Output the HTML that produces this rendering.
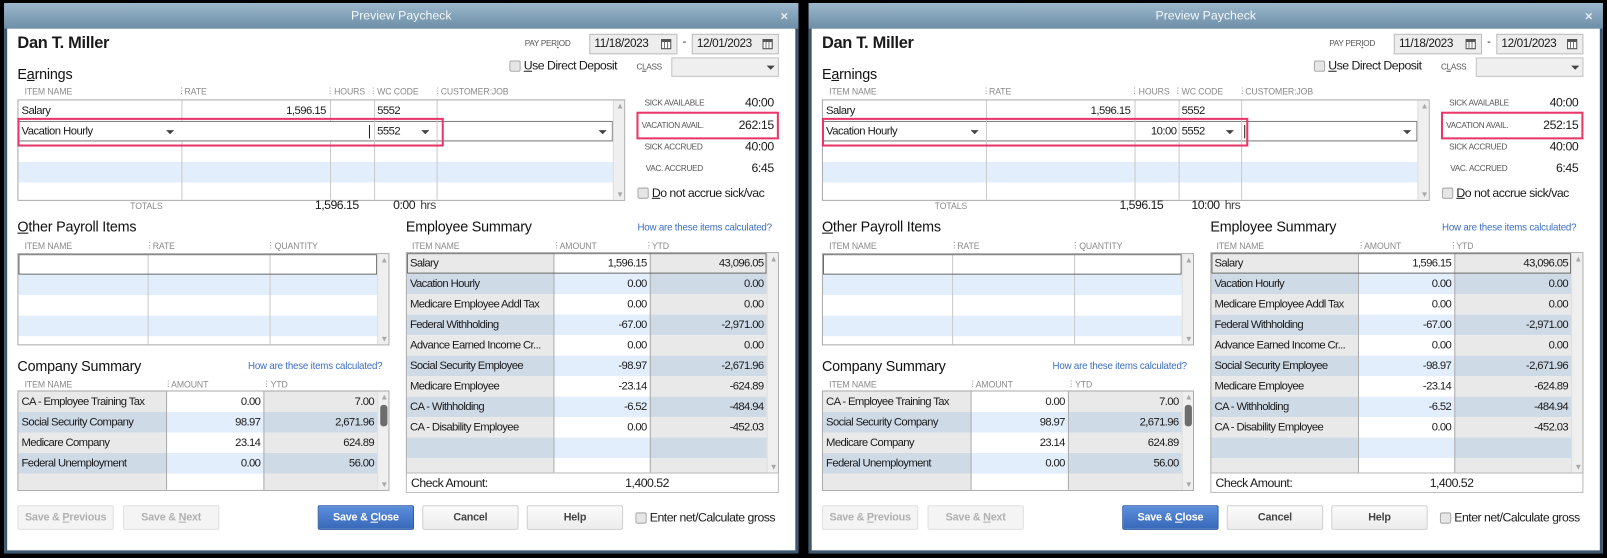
<!DOCTYPE html>
<html><head><meta charset="utf-8"><style>
*{box-sizing:border-box}
body{margin:0;width:1607px;height:557px;background:#000;overflow:hidden;font-family:"Liberation Sans",sans-serif;font-size:11px;color:#1a1a1a}
#s{position:absolute;left:0;top:0;width:1568px;height:544px;transform:scale(1.02487);transform-origin:0 0}
.d{position:absolute;top:0;width:785px;height:544px}
.a{position:absolute;white-space:nowrap}
.frame{left:4px;top:3px;width:775px;height:537px;background:#fff;border:3px solid #3b5870;border-top:none}
.title{left:4px;top:3px;width:775px;height:25px;background:linear-gradient(#9bb7cc,#6d8ea7);color:#f4f8fb;text-align:center;line-height:25px;font-size:12px}
.x{right:10px;top:0;color:#e4ecf2;font-weight:bold;font-size:13px}
.h{font-size:8.5px;color:#8a8a8a;letter-spacing:-.1px}
.sec{font-size:14px;color:#111;letter-spacing:-.2px}
.lnk{font-size:9.5px;color:#3b6ec2;letter-spacing:-.2px}
.grid{border:1px solid #a9a9a9;background:#fff;overflow:hidden}
.vl{position:absolute;top:0;bottom:0;width:1px;background:#c9c9c9}
.sb{position:absolute;top:0;bottom:0;background:#efefef;border-left:1px solid #ddd}
.sb i{position:absolute;left:2px;font-style:normal;font-size:8px;color:#a8a8a8}
.row{position:absolute;left:0;height:20px;line-height:20px;letter-spacing:-.5px}
.lb{background:#e2eefc}
.r{position:absolute;left:0;display:flex;height:20px;line-height:20px;letter-spacing:-.6px}
.r div{padding:0 3px;overflow:hidden}
.g{background:#e9e9e9}.b{background:#cfdae7}.w{background:#fff}.l{background:#e2eefc}
.num{text-align:right}
.cb{width:11px;height:11px;border:1px solid #aaa;background:#e6e6e6;border-radius:2px}
.btn{top:493px;height:24px;line-height:22px;text-align:center;font-weight:bold;font-size:10.5px;border:1px solid #cfcfcf;border-radius:2px;background:linear-gradient(#fbfbfb,#ececec);color:#444;letter-spacing:-.2px}
.dis{color:#b0b0b0;background:#f4f4f4;border-color:#e0e0e0}
.pri{background:linear-gradient(#5b8fdc,#3868b8);border-color:#2f5ca6;color:#fff}
.date{top:33px;height:20px;background:#ededed;border:1px solid #bdbdbd;font-size:11.5px;line-height:18px;padding-left:4px;letter-spacing:-.4px}
.cal{position:absolute;right:5px;top:4px;width:10px;height:10px;border:1px solid #555;border-top-width:3px;background:repeating-linear-gradient(90deg,#fff 0 2px,#777 2px 3px)}
.arr{width:0;height:0;border-left:4px solid transparent;border-right:4px solid transparent;border-top:4px solid #444}
.red{border:2px solid #e8386a}
.rp{font-size:8px;color:#555;letter-spacing:-.3px}
.rv{font-size:12px;text-align:right;width:60px;letter-spacing:-.4px}
.t12{font-size:12px;letter-spacing:-.5px}
</style></head><body><div id="s">

<!-- LEFT -->
<div class="d" style="left:0">
<div class="a frame"></div>
<div class="a title">Preview Paycheck<span class="a x">×</span></div>
<div class="a" style="left:17px;top:34px;font-size:16px;font-weight:bold;letter-spacing:-.3px">Dan T. Miller</div>
<div class="a sec" style="left:17px;top:64px">E<u>a</u>rnings</div>
<div class="a rp" style="left:512px;top:38px">PAY PER<u>I</u>OD</div>
<div class="a date" style="left:575px;width:86px">11/18/2023<span class="cal"></span></div>
<div class="a" style="left:666px;top:35px">-</div>
<div class="a date" style="left:675px;width:85px">12/01/2023<span class="cal"></span></div>
<div class="a cb" style="left:497px;top:59px"></div>
<div class="a t12" style="left:511px;top:57px"><u>U</u>se Direct Deposit</div>
<div class="a rp" style="left:621px;top:61px">C<u>L</u>ASS</div>
<div class="a" style="left:655px;top:56px;width:105px;height:19px;background:#efefef;border:1px solid #c4c4c4"><div class="a arr" style="left:92px;top:7px"></div></div>

<div class="a h" style="left:24px;top:84px">ITEM NAME</div><div class="a h" style="left:173px;top:83px">⋮</div>
<div class="a h" style="left:180px;top:84px">RATE</div><div class="a h" style="left:318px;top:83px">⋮</div>
<div class="a h" style="left:326px;top:84px">HOURS</div><div class="a h" style="left:360px;top:83px">⋮</div>
<div class="a h" style="left:368px;top:84px">WC CODE</div><div class="a h" style="left:423px;top:83px">⋮</div>
<div class="a h" style="left:430px;top:84px">CUSTOMER:JOB</div>
<div class="a grid" style="left:17px;top:97px;width:593px;height:99px">
 <div class="row lb" style="top:60px;width:580px"></div>
 <div class="vl" style="left:159px"></div><div class="vl" style="left:304px"></div><div class="vl" style="left:347px"></div><div class="vl" style="left:408px"></div>
 <div class="row" style="top:0;left:3px">Salary</div>
 <div class="row num" style="top:0;left:200px;width:100px">1,596.15</div>
 <div class="row" style="top:0;left:350px">5552</div>
 <div class="row" style="top:20px;width:580px;border:1px solid #7a7a7a;background:#fff"></div>
 <div class="row" style="top:20px;left:3px">Vacation Hourly</div>
 <div class="a arr" style="left:144px;top:29px"></div>
 <div class="a" style="left:342px;top:24px;width:1px;height:13px;background:#222"></div>
 <div class="a" style="left:347px;top:20px;width:1px;height:20px;background:#c9c9c9"></div>
 <div class="row" style="top:20px;left:350px">5552</div>
 <div class="a arr" style="left:393px;top:29px"></div>
 <div class="a" style="left:408px;top:20px;width:1px;height:20px;background:#c9c9c9"></div>
 <div class="a arr" style="left:566px;top:29px"></div>
 <div class="sb" style="left:580px;width:12px"><i style="top:1px">▲</i><i style="bottom:1px">▼</i></div>
</div>
<div class="a red" style="left:17px;top:115px;width:416px;height:28px"></div>
<div class="a h" style="left:127px;top:196px">TOTALS</div>
<div class="a num t12" style="left:270px;top:193px;width:80px">1,596.15</div>
<div class="a num t12" style="left:360px;top:193px;width:45px">0:00</div>
<div class="a t12" style="left:410px;top:193px;color:#444">hrs</div>

<div class="a rp" style="left:629px;top:96px">SICK AVAILABLE</div><div class="a rv" style="left:695px;top:93px">40:00</div>
<div class="a rp" style="left:626px;top:118px">VACATION AVAIL.</div><div class="a rv" style="left:695px;top:115px">262:15</div>
<div class="a rp" style="left:629px;top:139px">SICK ACCRUED</div><div class="a rv" style="left:695px;top:136px">40:00</div>
<div class="a rp" style="left:630px;top:160px">VAC. ACCRUED</div><div class="a rv" style="left:695px;top:157px">6:45</div>
<div class="a red" style="left:621px;top:109px;width:139px;height:27px"></div>
<div class="a cb" style="left:622px;top:183px"></div>
<div class="a t12" style="left:636px;top:181px"><u>D</u>o not accrue sick/vac</div>

<div class="a sec" style="left:17px;top:213px"><u>O</u>ther Payroll Items</div>
<div class="a h" style="left:24px;top:235px">ITEM NAME</div><div class="a h" style="left:142px;top:234px">⋮</div>
<div class="a h" style="left:149px;top:235px">RATE</div><div class="a h" style="left:260px;top:234px">⋮</div>
<div class="a h" style="left:268px;top:235px">QUANTITY</div>
<div class="a grid" style="left:17px;top:247px;width:363px;height:90px">
 <div class="row lb" style="top:20px;width:350px"></div>
 <div class="row lb" style="top:60px;width:350px"></div>
 <div class="vl" style="left:126px"></div><div class="vl" style="left:245px"></div>
 <div class="row" style="top:0;width:350px;border:1px solid #6a6a6a"></div>
 <div class="sb" style="left:350px;width:12px"><i style="top:1px">▲</i><i style="bottom:1px">▼</i></div>
</div>

<div class="a sec" style="left:17px;top:349px">Company Summary</div>
<div class="a lnk" style="left:242px;top:352px">How are these items calculated?</div>
<div class="a h" style="left:24px;top:370px">ITEM NAME</div><div class="a h" style="left:160px;top:369px">⋮</div>
<div class="a h" style="left:167px;top:370px">AMOUNT</div><div class="a h" style="left:256px;top:369px">⋮</div>
<div class="a h" style="left:264px;top:370px">YTD</div>
<div class="a grid" style="left:17px;top:381px;width:363px;height:98px">
 <div class="r" style="top:0"><div class="g" style="width:144px">CA - Employee Training Tax</div><div class="w num" style="width:95px">0.00</div><div class="g num" style="width:111px">7.00</div></div>
 <div class="r" style="top:20px"><div class="b" style="width:144px">Social Security Company</div><div class="l num" style="width:95px">98.97</div><div class="b num" style="width:111px">2,671.96</div></div>
 <div class="r" style="top:40px"><div class="g" style="width:144px">Medicare Company</div><div class="w num" style="width:95px">23.14</div><div class="g num" style="width:111px">624.89</div></div>
 <div class="r" style="top:60px"><div class="b" style="width:144px">Federal Unemployment</div><div class="l num" style="width:95px">0.00</div><div class="b num" style="width:111px">56.00</div></div>
 <div class="r" style="top:80px"><div class="g" style="width:144px"></div><div class="w" style="width:95px"></div><div class="g" style="width:111px"></div></div>
 <div class="vl" style="left:144px;background:#aaa"></div><div class="vl" style="left:239px;background:#aaa"></div>
 <div class="sb" style="left:350px;width:12px"><i style="top:1px">▲</i><div class="a" style="left:2px;top:13px;width:7px;height:21px;border-radius:3px;background:#6d6d6d"></div><i style="bottom:1px">▼</i></div>
</div>

<div class="a sec" style="left:396px;top:213px">Employee Summary</div>
<div class="a lnk" style="left:622px;top:217px">How are these items calculated?</div>
<div class="a h" style="left:402px;top:235px">ITEM NAME</div><div class="a h" style="left:539px;top:234px">⋮</div>
<div class="a h" style="left:546px;top:235px">AMOUNT</div><div class="a h" style="left:629px;top:234px">⋮</div>
<div class="a h" style="left:636px;top:235px">YTD</div>
<div class="a grid" style="left:396px;top:246px;width:364px;height:216px">
 <div class="r" style="top:0"><div class="g" style="width:143px">Salary</div><div class="w num" style="width:94px">1,596.15</div><div class="g num" style="width:114px">43,096.05</div></div>
 <div class="r" style="top:20px"><div class="b" style="width:143px">Vacation Hourly</div><div class="l num" style="width:94px">0.00</div><div class="b num" style="width:114px">0.00</div></div>
 <div class="r" style="top:40px"><div class="g" style="width:143px">Medicare Employee Addl Tax</div><div class="w num" style="width:94px">0.00</div><div class="g num" style="width:114px">0.00</div></div>
 <div class="r" style="top:60px"><div class="b" style="width:143px">Federal Withholding</div><div class="l num" style="width:94px">-67.00</div><div class="b num" style="width:114px">-2,971.00</div></div>
 <div class="r" style="top:80px"><div class="g" style="width:143px">Advance Earned Income Cr...</div><div class="w num" style="width:94px">0.00</div><div class="g num" style="width:114px">0.00</div></div>
 <div class="r" style="top:100px"><div class="b" style="width:143px">Social Security Employee</div><div class="l num" style="width:94px">-98.97</div><div class="b num" style="width:114px">-2,671.96</div></div>
 <div class="r" style="top:120px"><div class="g" style="width:143px">Medicare Employee</div><div class="w num" style="width:94px">-23.14</div><div class="g num" style="width:114px">-624.89</div></div>
 <div class="r" style="top:140px"><div class="b" style="width:143px">CA - Withholding</div><div class="l num" style="width:94px">-6.52</div><div class="b num" style="width:114px">-484.94</div></div>
 <div class="r" style="top:160px"><div class="g" style="width:143px">CA - Disability Employee</div><div class="w num" style="width:94px">0.00</div><div class="g num" style="width:114px">-452.03</div></div>
 <div class="r" style="top:180px"><div class="b" style="width:143px"></div><div class="l" style="width:94px"></div><div class="b" style="width:114px"></div></div>
 <div class="r" style="top:200px"><div class="g" style="width:143px"></div><div class="w" style="width:94px"></div><div class="g" style="width:114px"></div></div>
 <div class="vl" style="left:143px;background:#aaa"></div><div class="vl" style="left:237px;background:#aaa"></div>
 <div class="a" style="left:0;top:0;width:351px;height:20px;border:1px solid #6a6a6a"></div>
 <div class="sb" style="left:351px;width:12px"><i style="top:1px">▲</i><i style="bottom:1px">▼</i></div>
</div>
<div class="a t12" style="left:396px;top:461px;width:364px;height:20px;border:1px solid #bbb;line-height:18px;padding-left:4px">Check Amount:<span class="a" style="left:213px">1,400.52</span></div>

<div class="a btn dis" style="left:17px;width:94px">Save &amp; <u>P</u>revious</div>
<div class="a btn dis" style="left:120px;width:94px">Save &amp; <u>N</u>ext</div>
<div class="a btn pri" style="left:310px;width:94px">Save &amp; <u>C</u>lose</div>
<div class="a btn" style="left:412px;width:94px">Cancel</div>
<div class="a btn" style="left:514px;width:94px">Help</div>
<div class="a cb" style="left:620px;top:500px"></div>
<div class="a t12" style="left:634px;top:498px">Enter net/Calculate <u>g</u>ross</div>
</div>

<!-- RIGHT -->
<div class="d" style="left:785px">
<div class="a frame"></div>
<div class="a title">Preview Paycheck<span class="a x">×</span></div>
<div class="a" style="left:17px;top:34px;font-size:16px;font-weight:bold;letter-spacing:-.3px">Dan T. Miller</div>
<div class="a sec" style="left:17px;top:64px">E<u>a</u>rnings</div>
<div class="a rp" style="left:512px;top:38px">PAY PER<u>I</u>OD</div>
<div class="a date" style="left:575px;width:86px">11/18/2023<span class="cal"></span></div>
<div class="a" style="left:666px;top:35px">-</div>
<div class="a date" style="left:675px;width:85px">12/01/2023<span class="cal"></span></div>
<div class="a cb" style="left:497px;top:59px"></div>
<div class="a t12" style="left:511px;top:57px"><u>U</u>se Direct Deposit</div>
<div class="a rp" style="left:621px;top:61px">C<u>L</u>ASS</div>
<div class="a" style="left:655px;top:56px;width:105px;height:19px;background:#efefef;border:1px solid #c4c4c4"><div class="a arr" style="left:92px;top:7px"></div></div>

<div class="a h" style="left:24px;top:84px">ITEM NAME</div><div class="a h" style="left:173px;top:83px">⋮</div>
<div class="a h" style="left:180px;top:84px">RATE</div><div class="a h" style="left:318px;top:83px">⋮</div>
<div class="a h" style="left:326px;top:84px">HOURS</div><div class="a h" style="left:360px;top:83px">⋮</div>
<div class="a h" style="left:368px;top:84px">WC CODE</div><div class="a h" style="left:423px;top:83px">⋮</div>
<div class="a h" style="left:430px;top:84px">CUSTOMER:JOB</div>
<div class="a grid" style="left:17px;top:97px;width:593px;height:99px">
 <div class="row lb" style="top:60px;width:580px"></div>
 <div class="vl" style="left:159px"></div><div class="vl" style="left:304px"></div><div class="vl" style="left:347px"></div><div class="vl" style="left:408px"></div>
 <div class="row" style="top:0;left:3px">Salary</div>
 <div class="row num" style="top:0;left:200px;width:100px">1,596.15</div>
 <div class="row" style="top:0;left:350px">5552</div>
 <div class="row" style="top:20px;width:580px;border:1px solid #7a7a7a;background:#fff"></div>
 <div class="row" style="top:20px;left:3px">Vacation Hourly</div>
 <div class="a arr" style="left:144px;top:29px"></div>
 <div class="a" style="left:159px;top:20px;width:1px;height:20px;background:#c9c9c9"></div>
 <div class="a" style="left:304px;top:20px;width:1px;height:20px;background:#c9c9c9"></div>
 <div class="row num" style="top:20px;left:305px;width:40px">10:00</div>
 <div class="a" style="left:347px;top:20px;width:1px;height:20px;background:#c9c9c9"></div>
 <div class="row" style="top:20px;left:350px">5552</div>
 <div class="a arr" style="left:393px;top:29px"></div>
 <div class="a" style="left:408px;top:20px;width:1px;height:20px;background:#c9c9c9"></div>
 <div class="a" style="left:411px;top:24px;width:1px;height:13px;background:#222"></div>
 <div class="a arr" style="left:566px;top:29px"></div>
 <div class="sb" style="left:580px;width:12px"><i style="top:1px">▲</i><i style="bottom:1px">▼</i></div>
</div>
<div class="a red" style="left:17px;top:115px;width:416px;height:28px"></div>
<div class="a h" style="left:127px;top:196px">TOTALS</div>
<div class="a num t12" style="left:270px;top:193px;width:80px">1,596.15</div>
<div class="a num t12" style="left:360px;top:193px;width:45px">10:00</div>
<div class="a t12" style="left:410px;top:193px;color:#444">hrs</div>

<div class="a rp" style="left:629px;top:96px">SICK AVAILABLE</div><div class="a rv" style="left:695px;top:93px">40:00</div>
<div class="a rp" style="left:626px;top:118px">VACATION AVAIL.</div><div class="a rv" style="left:695px;top:115px">252:15</div>
<div class="a rp" style="left:629px;top:139px">SICK ACCRUED</div><div class="a rv" style="left:695px;top:136px">40:00</div>
<div class="a rp" style="left:630px;top:160px">VAC. ACCRUED</div><div class="a rv" style="left:695px;top:157px">6:45</div>
<div class="a red" style="left:621px;top:109px;width:139px;height:27px"></div>
<div class="a cb" style="left:622px;top:183px"></div>
<div class="a t12" style="left:636px;top:181px"><u>D</u>o not accrue sick/vac</div>

<div class="a sec" style="left:17px;top:213px"><u>O</u>ther Payroll Items</div>
<div class="a h" style="left:24px;top:235px">ITEM NAME</div><div class="a h" style="left:142px;top:234px">⋮</div>
<div class="a h" style="left:149px;top:235px">RATE</div><div class="a h" style="left:260px;top:234px">⋮</div>
<div class="a h" style="left:268px;top:235px">QUANTITY</div>
<div class="a grid" style="left:17px;top:247px;width:363px;height:90px">
 <div class="row lb" style="top:20px;width:350px"></div>
 <div class="row lb" style="top:60px;width:350px"></div>
 <div class="vl" style="left:126px"></div><div class="vl" style="left:245px"></div>
 <div class="row" style="top:0;width:350px;border:1px solid #6a6a6a"></div>
 <div class="sb" style="left:350px;width:12px"><i style="top:1px">▲</i><i style="bottom:1px">▼</i></div>
</div>

<div class="a sec" style="left:17px;top:349px">Company Summary</div>
<div class="a lnk" style="left:242px;top:352px">How are these items calculated?</div>
<div class="a h" style="left:24px;top:370px">ITEM NAME</div><div class="a h" style="left:160px;top:369px">⋮</div>
<div class="a h" style="left:167px;top:370px">AMOUNT</div><div class="a h" style="left:256px;top:369px">⋮</div>
<div class="a h" style="left:264px;top:370px">YTD</div>
<div class="a grid" style="left:17px;top:381px;width:363px;height:98px">
 <div class="r" style="top:0"><div class="g" style="width:144px">CA - Employee Training Tax</div><div class="w num" style="width:95px">0.00</div><div class="g num" style="width:111px">7.00</div></div>
 <div class="r" style="top:20px"><div class="b" style="width:144px">Social Security Company</div><div class="l num" style="width:95px">98.97</div><div class="b num" style="width:111px">2,671.96</div></div>
 <div class="r" style="top:40px"><div class="g" style="width:144px">Medicare Company</div><div class="w num" style="width:95px">23.14</div><div class="g num" style="width:111px">624.89</div></div>
 <div class="r" style="top:60px"><div class="b" style="width:144px">Federal Unemployment</div><div class="l num" style="width:95px">0.00</div><div class="b num" style="width:111px">56.00</div></div>
 <div class="r" style="top:80px"><div class="g" style="width:144px"></div><div class="w" style="width:95px"></div><div class="g" style="width:111px"></div></div>
 <div class="vl" style="left:144px;background:#aaa"></div><div class="vl" style="left:239px;background:#aaa"></div>
 <div class="sb" style="left:350px;width:12px"><i style="top:1px">▲</i><div class="a" style="left:2px;top:13px;width:7px;height:21px;border-radius:3px;background:#6d6d6d"></div><i style="bottom:1px">▼</i></div>
</div>

<div class="a sec" style="left:396px;top:213px">Employee Summary</div>
<div class="a lnk" style="left:622px;top:217px">How are these items calculated?</div>
<div class="a h" style="left:402px;top:235px">ITEM NAME</div><div class="a h" style="left:539px;top:234px">⋮</div>
<div class="a h" style="left:546px;top:235px">AMOUNT</div><div class="a h" style="left:629px;top:234px">⋮</div>
<div class="a h" style="left:636px;top:235px">YTD</div>
<div class="a grid" style="left:396px;top:246px;width:364px;height:216px">
 <div class="r" style="top:0"><div class="g" style="width:143px">Salary</div><div class="w num" style="width:94px">1,596.15</div><div class="g num" style="width:114px">43,096.05</div></div>
 <div class="r" style="top:20px"><div class="b" style="width:143px">Vacation Hourly</div><div class="l num" style="width:94px">0.00</div><div class="b num" style="width:114px">0.00</div></div>
 <div class="r" style="top:40px"><div class="g" style="width:143px">Medicare Employee Addl Tax</div><div class="w num" style="width:94px">0.00</div><div class="g num" style="width:114px">0.00</div></div>
 <div class="r" style="top:60px"><div class="b" style="width:143px">Federal Withholding</div><div class="l num" style="width:94px">-67.00</div><div class="b num" style="width:114px">-2,971.00</div></div>
 <div class="r" style="top:80px"><div class="g" style="width:143px">Advance Earned Income Cr...</div><div class="w num" style="width:94px">0.00</div><div class="g num" style="width:114px">0.00</div></div>
 <div class="r" style="top:100px"><div class="b" style="width:143px">Social Security Employee</div><div class="l num" style="width:94px">-98.97</div><div class="b num" style="width:114px">-2,671.96</div></div>
 <div class="r" style="top:120px"><div class="g" style="width:143px">Medicare Employee</div><div class="w num" style="width:94px">-23.14</div><div class="g num" style="width:114px">-624.89</div></div>
 <div class="r" style="top:140px"><div class="b" style="width:143px">CA - Withholding</div><div class="l num" style="width:94px">-6.52</div><div class="b num" style="width:114px">-484.94</div></div>
 <div class="r" style="top:160px"><div class="g" style="width:143px">CA - Disability Employee</div><div class="w num" style="width:94px">0.00</div><div class="g num" style="width:114px">-452.03</div></div>
 <div class="r" style="top:180px"><div class="b" style="width:143px"></div><div class="l" style="width:94px"></div><div class="b" style="width:114px"></div></div>
 <div class="r" style="top:200px"><div class="g" style="width:143px"></div><div class="w" style="width:94px"></div><div class="g" style="width:114px"></div></div>
 <div class="vl" style="left:143px;background:#aaa"></div><div class="vl" style="left:237px;background:#aaa"></div>
 <div class="a" style="left:0;top:0;width:351px;height:20px;border:1px solid #6a6a6a"></div>
 <div class="sb" style="left:351px;width:12px"><i style="top:1px">▲</i><i style="bottom:1px">▼</i></div>
</div>
<div class="a t12" style="left:396px;top:461px;width:364px;height:20px;border:1px solid #bbb;line-height:18px;padding-left:4px">Check Amount:<span class="a" style="left:213px">1,400.52</span></div>

<div class="a btn dis" style="left:17px;width:94px">Save &amp; <u>P</u>revious</div>
<div class="a btn dis" style="left:120px;width:94px">Save &amp; <u>N</u>ext</div>
<div class="a btn pri" style="left:310px;width:94px">Save &amp; <u>C</u>lose</div>
<div class="a btn" style="left:412px;width:94px">Cancel</div>
<div class="a btn" style="left:514px;width:94px">Help</div>
<div class="a cb" style="left:620px;top:500px"></div>
<div class="a t12" style="left:634px;top:498px">Enter net/Calculate <u>g</u>ross</div>
</div>
</div></body></html>
